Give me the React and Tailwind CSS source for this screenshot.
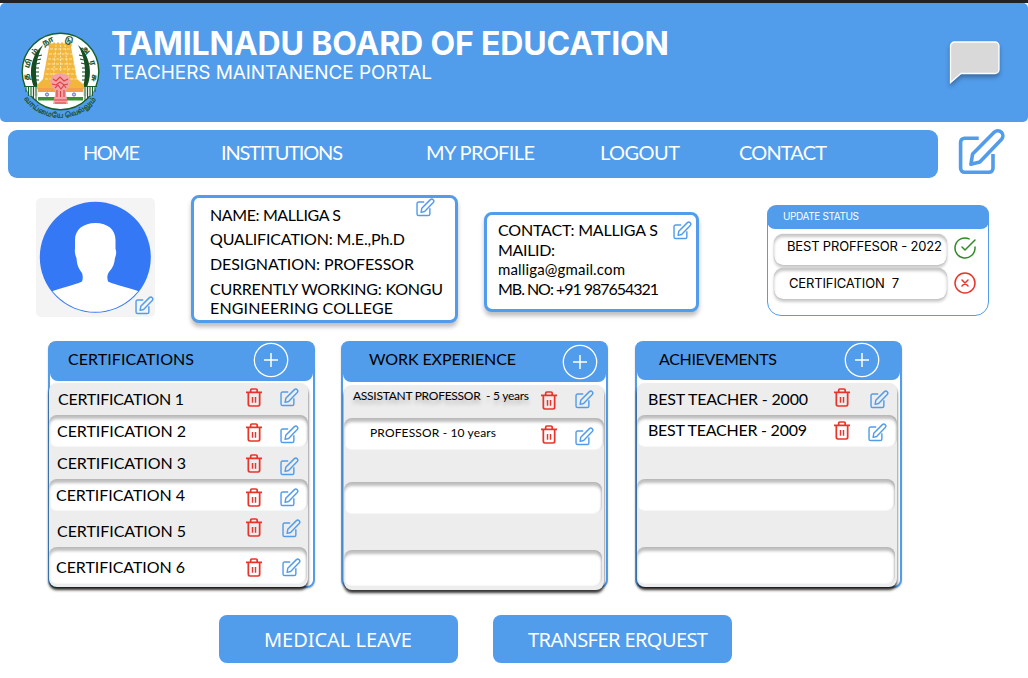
import { useLayoutEffect, useRef, useState } from "react";

// Text that spreads its letters so that the line is `w` pixels wide.
function Fit({ w, className = "", children }) {
  const ref = useRef(null);
  const [spacing, setSpacing] = useState(0);
  useLayoutEffect(() => {
    const el = ref.current;
    el.style.letterSpacing = "0px";
    const natural = el.getBoundingClientRect().width;
    const value = (w - natural) / (children.length - 1);
    el.style.letterSpacing = value + "px";
    setSpacing(value);
  }, [w, children]);
  return (
    <span className={"block shrink-0 " + className}>
      <span ref={ref} className="inline-block whitespace-pre" style={{ letterSpacing: spacing + "px" }}>
        {children}
      </span>
    </span>
  );
}

function EditIcon({ className = "" }) {
  return (
    <svg viewBox="0 0 48 48" className={"block shrink-0 " + className} fill="none" stroke="#519ceb" strokeWidth="3.6" strokeLinejoin="round">
      <path d="M20.7 10.2H6.6a4 4 0 0 0-4 4V40.3a4 4 0 0 0 4 4H31a4 4 0 0 0 4-4V26" />
      <path d="M12.9 36.2 14.6 26 36.4 4.1A5.1 5.1 0 0 1 43.6 11.3L21.8 34Z" />
    </svg>
  );
}

function TrashIcon({ className = "" }) {
  return (
    <svg viewBox="0 0 48 57" className={"block h-[19px] w-4 shrink-0 " + className} fill="none" stroke="#e8352b" strokeWidth="5.2">
      <path d="M0 13H48M14 12V6.500a3.500 3.500 0 0 1 3.500-3.500H30a3.500 3.500 0 0 1 3.500 3.500V12M7 13V49a5 5 0 0 0 5 5H36a5 5 0 0 0 5-5V13" />
      <path d="M19.500 27V44M28.500 27V44" strokeWidth="4.4" />
    </svg>
  );
}

function PlusCircle({ className = "" }) {
  return (
    <svg viewBox="0 0 36 36" className={"block size-9 shrink-0 " + className} fill="none" stroke="#fff" strokeWidth="1.3">
      <circle cx="18" cy="18" r="16.700" />
      <path d="M18 11V25M11 18H25" strokeWidth="1.500" />
    </svg>
  );
}

// Letters on the ring of the emblem: [letter, x, y, rotation].
const ringLetters = [
  ["த", 6, 46, -92], ["மி", 7.5, 32.5, -70], ["ழ்", 14, 21, -48], ["நா", 27, 10.5, -26],
  ["டு", 48, 9.5, 14], ["அ", 64.5, 19, 46], ["ர", 71.5, 32, 72], ["சு", 73, 47, 96],
];

function Emblem() {
  return (
    <svg viewBox="0 0 80 90" className="block h-[90px] w-20 shrink-0 overflow-visible">
      <circle cx="39.500" cy="40.500" r="38.300" fill="#fff" stroke="#17602b" strokeWidth="1.400" />
      <path d="M22 14C10 24 7 42 13 56L17 56C13 42 15 26 22 14ZM57 14C69 24 72 42 66 56L62 56C66 42 64 26 57 14Z" fill="#174d22" />
      <path d="M17 25l4-1M16 29l4-1M15 33l4-1M14 37h4M14 41h4M14 45h4M14 49h4M62 25l-4-1M63 29l-4-1M64 33l-4-1M65 37h-4M65 41h-4M65 45h-4M65 49h-4" stroke="#174d22" strokeWidth="1.200" />
      <path d="M3.500 55.500H75.500L70 65H9Z" fill="#dfe9df" />
      <path d="M3 55.500H16M63 55.500H76M5 56v5M7.500 56v9M10 56v10M12.500 56v12M15 56v14M64 56v14M66.500 56v12M69 56v10M71.500 56v9M74 56v5" stroke="#17602b" strokeWidth="1" />
      <path d="M27 14l2-3 2 2 2-2 2 2 2-2 2 2 2-2 2 2 2-2 2 2 2-2 2 3-1 2 6 32 7 6v4H16v-4l6-6 6-32Z" fill="#f2b63c" />
      <path d="M29 18H50M28 23H51M27 28H52M26.500 33H53M25.500 38H54M24.500 43H55M24 48H56" stroke="#fff1c9" strokeWidth=".8" strokeDasharray="3 1.200" />
      <path d="M35 14 32 50M44 14 48 50M39.500 14V40" stroke="#fff1c9" strokeWidth=".8" strokeDasharray="2 1.500" />
      <path d="M17 57H62V61H17Z" fill="#f3a04d" />
      <path d="M17 61H62V66H17Z" fill="#fff" />
      <path d="M17 66H62V69.500H17Z" fill="#3c9135" />
      <circle cx="26" cy="63.500" r="1.600" fill="#c9cdf0" stroke="#4454a5" strokeWidth=".8" />
      <circle cx="53" cy="63.500" r="1.600" fill="#c9cdf0" stroke="#4454a5" strokeWidth=".8" />
      <path d="M31 45l4-2 4-1 5 1 4 3 2 5-2 5-3 3v5l1 4 1 5H32l1-5 1-4v-5l-3-3-2-6Z" fill="#f4a3a4" />
      <path d="M32 48l3 2 4-4 4 4 4-2M31 53l4 1 4-3 4 3 4-1M34 57l3-3 3 4 3-4 2 3M36 59v7M39.500 60v6M43 59v7M33 69h13M34 72h11" stroke="#dc4047" strokeWidth="1.100" fill="none" />
      <g fill="#174d22" stroke="#174d22" strokeWidth=".2" fontSize="7.500" fontWeight="600" textAnchor="middle" fontFamily="Noto Sans Tamil, Noto Sans, sans-serif">
        {ringLetters.map(([ch, x, y, r]) => (
          <text key={ch} transform={`translate(${x} ${y}) rotate(${r})`} y="2">{ch}</text>
        ))}
      </g>
      <path id="motto" d="M2.500 67A44.500 44.500 0 0 0 76.500 67" fill="none" />
      <text fill="#174d22" stroke="#174d22" strokeWidth=".2" fontSize="7" fontFamily="Noto Sans Tamil, Noto Sans, sans-serif">
        <textPath href="#motto" startOffset="1" textLength="84">வாய்மையே வெல்லும்</textPath>
      </text>
    </svg>
  );
}

const whiteRow = "rounded-lg bg-white shadow-[inset_0_4px_3px_rgba(0,0,0,0.25),inset_-1px_0_2px_rgba(0,0,0,0.12)]";

function Row({ row, cols }) {
  return (
    <div className={"grid shrink-0 items-start " + cols + " " + row.box}>
      {row.text && (
        <>
          <Fit w={row.w} className={row.at}>{row.text}</Fit>
          <TrashIcon className={row.trash} />
          <EditIcon className={"size-[19px] " + row.edit} />
        </>
      )}
    </div>
  );
}

function Panel({ title, titleW, titleAt, plusAt, head, panel, cols, rows }) {
  return (
    <section className="h-[247px] w-[267px] shrink-0 rounded-lg border-2 border-[#519ceb] bg-white shadow-[0_1px_2px_rgba(0,0,0,0.2)]">
      <header className={"flex items-start rounded-b-lg bg-[#519ceb] " + head}>
        <Fit w={titleW} className={"w-[200px] text-base leading-5 " + titleAt}>{title}</Fit>
        <PlusCircle className={plusAt} />
      </header>
      <div className={"flex flex-col rounded-lg bg-[#ededed] shadow-[0_3px_3px_rgba(0,0,0,0.8)] " + panel}>
        {rows.map((row, i) => <Row key={i} row={row} cols={cols} />)}
      </div>
    </section>
  );
}

const certRows = [
  { box: "h-8", text: "CERTIFICATION 1", w: 126, at: "ml-[9px] mt-[6px] text-base leading-5", trash: "mt-[5px]", edit: "mt-[5px]" },
  { box: "h-8 " + whiteRow, text: "CERTIFICATION 2", w: 129, at: "ml-2 mt-[6px] text-base leading-5", trash: "mt-2", edit: "mt-[10px]" },
  { box: "h-8", text: "CERTIFICATION 3", w: 129, at: "ml-2 mt-[6px] text-base leading-5", trash: "mt-[7px]", edit: "mt-[10px]" },
  { box: "h-8 " + whiteRow, text: "CERTIFICATION 4", w: 129, at: "ml-[7px] mt-[6px] text-base leading-5", trash: "mt-[9px]", edit: "mt-[9px]" },
  { box: "h-9", text: "CERTIFICATION 5", w: 129, at: "ml-2 mt-[10px] text-base leading-5", trash: "mt-[7px]", edit: "ml-0.5 mt-2" },
  { box: "mr-px mb-[3px] h-[37px] " + whiteRow, text: "CERTIFICATION 6", w: 129, at: "ml-[7px] mt-[10px] text-base leading-5", trash: "mt-[11px]", edit: "ml-0.5 mt-[11px]" },
];

const workRows = [
  { box: "h-[33px]", text: "ASSISTANT PROFESSOR  - 5 years", w: 176, at: "ml-[9px] mt-px text-xs leading-5 [text-shadow:0_4px_4px_rgba(0,0,0,0.25)]", trash: "mt-[6px]", edit: "mt-[5px]" },
  { box: "h-8 " + whiteRow, text: "PROFESSOR - 10 years", w: 126, at: "ml-[26px] mt-[5px] text-xs leading-5", trash: "mt-[7px]", edit: "mt-[9px]" },
  { box: "h-8" },
  { box: "mr-0.5 h-8 " + whiteRow },
  { box: "h-9" },
  { box: "mr-0.5 mb-[4px] h-9 " + whiteRow },
];

const achRows = [
  { box: "h-8", text: "BEST TEACHER - 2000", w: 160, at: "ml-[11px] mt-[6px] text-base leading-5", trash: "mt-[5px]", edit: "ml-px mt-[7px]" },
  { box: "h-8 " + whiteRow, text: "BEST TEACHER - 2009", w: 159, at: "ml-[11px] mt-[5px] text-base leading-5", trash: "mt-[6px]", edit: "mt-2 -ml-px" },
  { box: "h-8" },
  { box: "mr-0.5 h-8 " + whiteRow },
  { box: "h-9" },
  { box: "mr-0.5 mb-[3px] h-[37px] " + whiteRow },
];

const infoCard = "flex items-start justify-between rounded-lg border-[3px] border-[#519ceb] bg-white shadow-[0_4px_4px_rgba(0,0,0,0.25)]";
const statusBox = "w-[173px] rounded-[9px] bg-white shadow-[inset_0_3px_3px_rgba(0,0,0,0.22),0_3px_3px_rgba(0,0,0,0.2),0_0_1px_rgba(0,0,0,0.35)]";

export default function App() {
  return (
    <div className="h-[678px] w-[1028px] overflow-hidden bg-white font-['Lato',sans-serif] text-black">
      <div className="h-[3px] bg-[#222]" />
      <header className="flex h-[119px] w-full items-start rounded-[5px] bg-[#519ceb] pl-[21px] text-white">
        <div className="pt-[28px]"><Emblem /></div>
        <div className="ml-[10px] flex-1 pt-[25px] font-['Inter',sans-serif]">
          <Fit w={558} className="h-8 text-[32px] leading-8 font-bold">TAMILNADU BOARD OF EDUCATION</Fit>
          <Fit w={321} className="mt-px text-[19px] leading-6">TEACHERS MAINTANENCE PORTAL</Fit>
        </div>
        <svg viewBox="0 0 56 52" className="mt-[34px] mr-[25px] block h-[52px] w-14 drop-shadow-[0_3px_2px_rgba(0,0,0,0.3)]">
          <path d="M3.500 45.500V9A4 4 0 0 1 7.500 5H48A4 4 0 0 1 52 9V32.500A4 4 0 0 1 48 36.500H14Z" fill="#d9d9d9" stroke="#fff" strokeWidth="1.300" />
        </svg>
      </header>

      <div className="flex items-start pt-2 pl-2">
        <nav className="flex h-12 w-[930px] items-start rounded-[9px] bg-[#519ceb] pt-[10px] pl-[75px] text-xl leading-6 text-white">
          <Fit w={57} className="w-[138px]">HOME</Fit>
          <Fit w={122} className="w-[205px]">INSTITUTIONS</Fit>
          <Fit w={109} className="w-[174px]">MY PROFILE</Fit>
          <Fit w={80} className="w-[139px]">LOGOUT</Fit>
          <Fit w={88}>CONTACT</Fit>
        </nav>
        <EditIcon className="-mt-[2px] ml-5 size-12" />
      </div>

      <div className="flex h-[163px] items-start pt-[17px] pl-9">
        <div className="relative mt-[3px] size-[119px] rounded-[5px] bg-[#f4f4f4]">
          <svg viewBox="0 0 119 119" className="block size-[119px]">
            <defs><clipPath id="face"><circle cx="59.300" cy="59.300" r="54.500" /></clipPath></defs>
            <circle cx="59.300" cy="59.300" r="55.500" fill="#3478f6" />
            <path clipPath="url(#face)" fill="#fff" d="M59.500 25C47 25 38.500 32 39 43V51C38.500 53 39 57 40.500 60C41 68 43 71 46 75C47 78 47 81 46 83.500C42 86 20 91 13 94.500L20 119H99L106 94.500C99 91 76 86 72 83.500C71 80 71 77 73 74C77 70 78.500 65 79 60C80.500 56 80.500 53 79.500 51V43C80 32 72 25 59.500 25Z" />
          </svg>
          <EditIcon className="absolute right-px bottom-[2px] size-[19px]" />
        </div>

        <div className={"ml-9 h-32 w-[267px] pt-[7px] pr-5 pl-4 text-base leading-5 " + infoCard}>
          <div className="w-[205px]">
            <Fit w={131}>NAME: MALLIGA S</Fit>
            <Fit w={195} className="mt-1">QUALIFICATION: M.E.,Ph.D</Fit>
            <Fit w={204} className="mt-[5px]">DESIGNATION: PROFESSOR</Fit>
            <Fit w={233} className="mt-[5px]">CURRENTLY WORKING: KONGU</Fit>
            <Fit w={183} className="-mt-px">ENGINEERING COLLEGE</Fit>
          </div>
          <EditIcon className="-mt-[7px] size-[19px]" />
        </div>

        <div className={"mt-[17px] ml-[26px] h-[100px] w-[215px] pt-[5px] pr-1 pl-[11px] text-base leading-5 " + infoCard}>
          <div>
            <Fit w={160}>CONTACT: MALLIGA S</Fit>
            <Fit w={57}>MAILID:</Fit>
            <Fit w={127} className="-mt-px text-[15px] leading-5">malliga@gmail.com</Fit>
            <Fit w={161}>MB. NO: +91 987654321</Fit>
          </div>
          <EditIcon className="mt-px size-[19px]" />
        </div>

        <div className="mt-[10px] ml-[68px] h-[111px] w-[222px] rounded-[14px] border border-[#519ceb] font-['Inter',sans-serif]">
          <div className="-mx-px -mt-px h-6 rounded-t-[9px] rounded-b-lg bg-[#519ceb] pt-px pl-4 text-[10px] leading-5 text-white">
            <Fit w={76}>UPDATE STATUS</Fit>
          </div>
          <div className="flex items-start gap-1.5 pt-[5px] pl-1.5">
            <div className={"h-[31px] pt-[2px] pl-[13px] text-[13px] leading-5 " + statusBox}>
              <Fit w={155}>BEST PROFFESOR - 2022</Fit>
            </div>
            <svg viewBox="0 0 24 24" className="mt-[2px] block size-6" fill="none" stroke="#2f8a24" strokeWidth="1.500" strokeLinecap="round" strokeLinejoin="round">
              <path d="M22 11.080V12a10 10 0 1 1-5.930-9.140" />
              <path d="M22 4 12 14.010 9 11.010" />
            </svg>
          </div>
          <div className="flex items-start gap-1.5 pt-[3px] pl-1.5">
            <div className={"h-[31px] pt-[5px] pl-[15px] text-[13px] leading-5 " + statusBox}>
              <Fit w={110}>CERTIFICATION  7</Fit>
            </div>
            <svg viewBox="0 0 24 24" className="mt-[3px] block size-6" fill="none" stroke="#e8352b" strokeWidth="1.500" strokeLinecap="round">
              <circle cx="12" cy="12" r="10" />
              <path d="m9 9 6 6M15 9l-6 6" />
            </svg>
          </div>
        </div>
      </div>

      <main className="flex h-[274px] items-start pl-12">
        <Panel title="CERTIFICATIONS" titleW={126} titleAt="ml-[18px] mt-[6px]" plusAt="-mt-px -ml-[15px]" head="h-[38px]"
          panel="-ml-px mt-[2px] w-[259px]" cols="grid-cols-[197px_34px_auto]" rows={certRows} />
        <div className="mr-[27px] ml-[26px]">
          <Panel title="WORK EXPERIENCE" titleW={147} titleAt="ml-[26px] mt-[6px]" plusAt="mt-px -ml-[7px]" head="h-[39px]"
            panel="ml-px mt-[3px] w-[260px]" cols="grid-cols-[197px_34px_auto]" rows={workRows} />
        </div>
        <Panel title="ACHIEVEMENTS" titleW={118} titleAt="ml-[22px] mt-[6px]" plusAt="-mt-px -ml-[15px]" head="h-[37px]"
          panel="mt-[3px] w-[260px]" cols="grid-cols-[197px_35px_auto]" rows={achRows} />
      </main>

      <footer className="flex gap-[35px] pl-[219px] font-['Noto_Sans',sans-serif] text-xl leading-6 text-white">
        <button className="flex h-12 w-[239px] rounded-lg bg-[#519ceb] pt-[13px] pl-[45px]"><Fit w={148}>MEDICAL LEAVE</Fit></button>
        <button className="flex h-12 w-[239px] rounded-lg bg-[#519ceb] pt-[13px] pl-[35px]"><Fit w={180}>TRANSFER ERQUEST</Fit></button>
      </footer>
    </div>
  );
}
